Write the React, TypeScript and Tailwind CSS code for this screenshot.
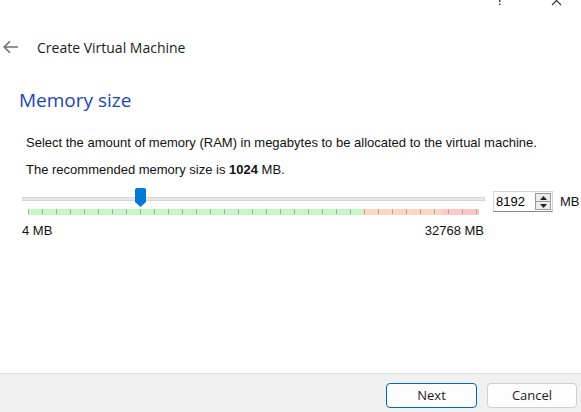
import React from 'react';
import { ArrowLeft } from 'lucide-react';

const ui = { fontFamily: '"Segoe UI", "Open Sans", "Noto Sans", sans-serif' };
const dlg = { fontFamily: 'Tahoma, "Liberation Sans", Arial, sans-serif' };

function Thumb() {
    return (
        <svg width="11" height="19" viewBox="0 0 11 19" className="absolute left-[113px] top-0">
            <path d="M2 0 H9 Q11 0 11 2 V14 L5.5 19 L0 14 V2 Q0 0 2 0 Z" fill="#0078d7" />
        </svg>
    );
}

function Scale() {
    const ticks = Array.from({ length: 33 }, (_, i) => 28 + i * 14).filter((x) => x < 479);
    return (
        <svg width="463" height="6" className="absolute left-0 top-[21px]">
            <rect x="6" y="0" width="335" height="6" fill="#c6f7c6" />
            <rect x="341" y="0" width="80" height="6" fill="#fed5c0" />
            <rect x="421" y="0" width="36" height="6" fill="#fec6c6" />
            {ticks.map((x) => (
                <rect key={x} x={x - 22} y="0" width="1" height="5" fill="#a8a8a0" />
            ))}
        </svg>
    );
}

function SpinBox() {
    return (
        <div className="flex items-stretch w-[60px] h-[21px] border border-[#d4d4d4] border-b-[#8a8a8a] bg-white">
            <span className="flex-1 pl-[2px] text-[13px] leading-[19px] text-black">8192</span>
            <div className="flex flex-col w-[16px] my-[1px] mr-[1px] border border-[#9a9a9a] bg-[#ececec]">
                <div className="flex-1 flex items-center justify-center border-b border-[#9a9a9a]">
                    <svg width="7" height="4" viewBox="0 0 7 4"><path d="M3.5 0 L7 4 H0 Z" fill="#222" /></svg>
                </div>
                <div className="flex-1 flex items-center justify-center">
                    <svg width="7" height="4" viewBox="0 0 7 4"><path d="M0 0 H7 L3.5 4 Z" fill="#222" /></svg>
                </div>
            </div>
        </div>
    );
}

export default function App() {
    return (
        <div className="relative w-[581px] h-[412px] bg-white flex flex-col overflow-hidden" style={ui}>
            {/* Window controls, clipped by the top edge */}
            <svg width="6" height="6" viewBox="0 0 6 6" className="absolute left-[497px] top-0">
                <rect x="2" y="0" width="1.4" height="2" fill="#333" />
                <rect x="2" y="3.6" width="1.4" height="1.4" fill="#333" />
            </svg>
            <svg width="12" height="6" viewBox="0 0 12 6" className="absolute left-[551px] top-0">
                <path d="M1 5 L5.5 0.5 M10 5 L5.5 0.5" stroke="#333" strokeWidth="1.1" fill="none" />
            </svg>

            {/* Header */}
            <div className="flex items-center h-[22px] mt-[36px]">
                <svg width="16" height="14" viewBox="0 0 16 14" className="ml-[3px] text-[#707070]">
                    <path d="M15 7 H1.5 M7 1.2 L1.2 7 L7 12.8" stroke="currentColor" strokeWidth="1.6" fill="none" />
                </svg>
                <span className="ml-[18px] text-[14px] text-[#1b1b1b]">Create Virtual Machine</span>
            </div>

            {/* Title */}
            <h1 className="mt-[29px] ml-[19px] h-[26px] text-[19px] leading-[26px] text-[#1c46b8]">Memory size</h1>

            {/* Body */}
            <div className="flex flex-col mt-[21px] text-[13px] text-[#111]" style={dlg}>
                <p className="ml-[26px] h-[18px] leading-[18px]">
                    Select the amount of memory (RAM) in megabytes to be allocated to the virtual machine.
                </p>
                <p className="ml-[26px] mt-[9px] h-[18px] leading-[18px]">
                    The recommended memory size is <b>1024</b> MB.
                </p>

                <div className="flex items-start mt-[9px] ml-[22px]">
                    <div className="flex flex-col w-[463px]">
                        <div className="relative h-[27px]">
                            <div className="absolute left-0 right-0 top-[9px] h-[4px] bg-[#e7e7e7] border border-[#d6d6d6]" />
                            <Scale />
                            <Thumb />
                        </div>
                        <div className="flex justify-between mt-[8px] h-[16px] leading-[16px]">
                            <span>4 MB</span>
                            <span className="mr-[1px]">32768 MB</span>
                        </div>
                    </div>
                    <div className="flex items-center mt-[3px] ml-[8px]">
                        <SpinBox />
                        <span className="ml-[7px]">MB</span>
                    </div>
                </div>
            </div>

            {/* Footer */}
            <div className="mt-auto h-[39px] bg-[#f0f0f0] border-t border-[#dedede] flex justify-end items-start pt-[9px] pr-[4px] gap-[10px]">
                <button className="w-[91px] h-[25px] rounded-[4px] border border-[#0067c0] bg-[#fdfdfd] text-[13px] text-[#1b1b1b]">
                    Next
                </button>
                <button className="w-[90px] h-[25px] rounded-[4px] border border-[#d0d0d0] bg-[#fdfdfd] text-[13px] text-[#1b1b1b]">
                    Cancel
                </button>
            </div>
        </div>
    );
}
